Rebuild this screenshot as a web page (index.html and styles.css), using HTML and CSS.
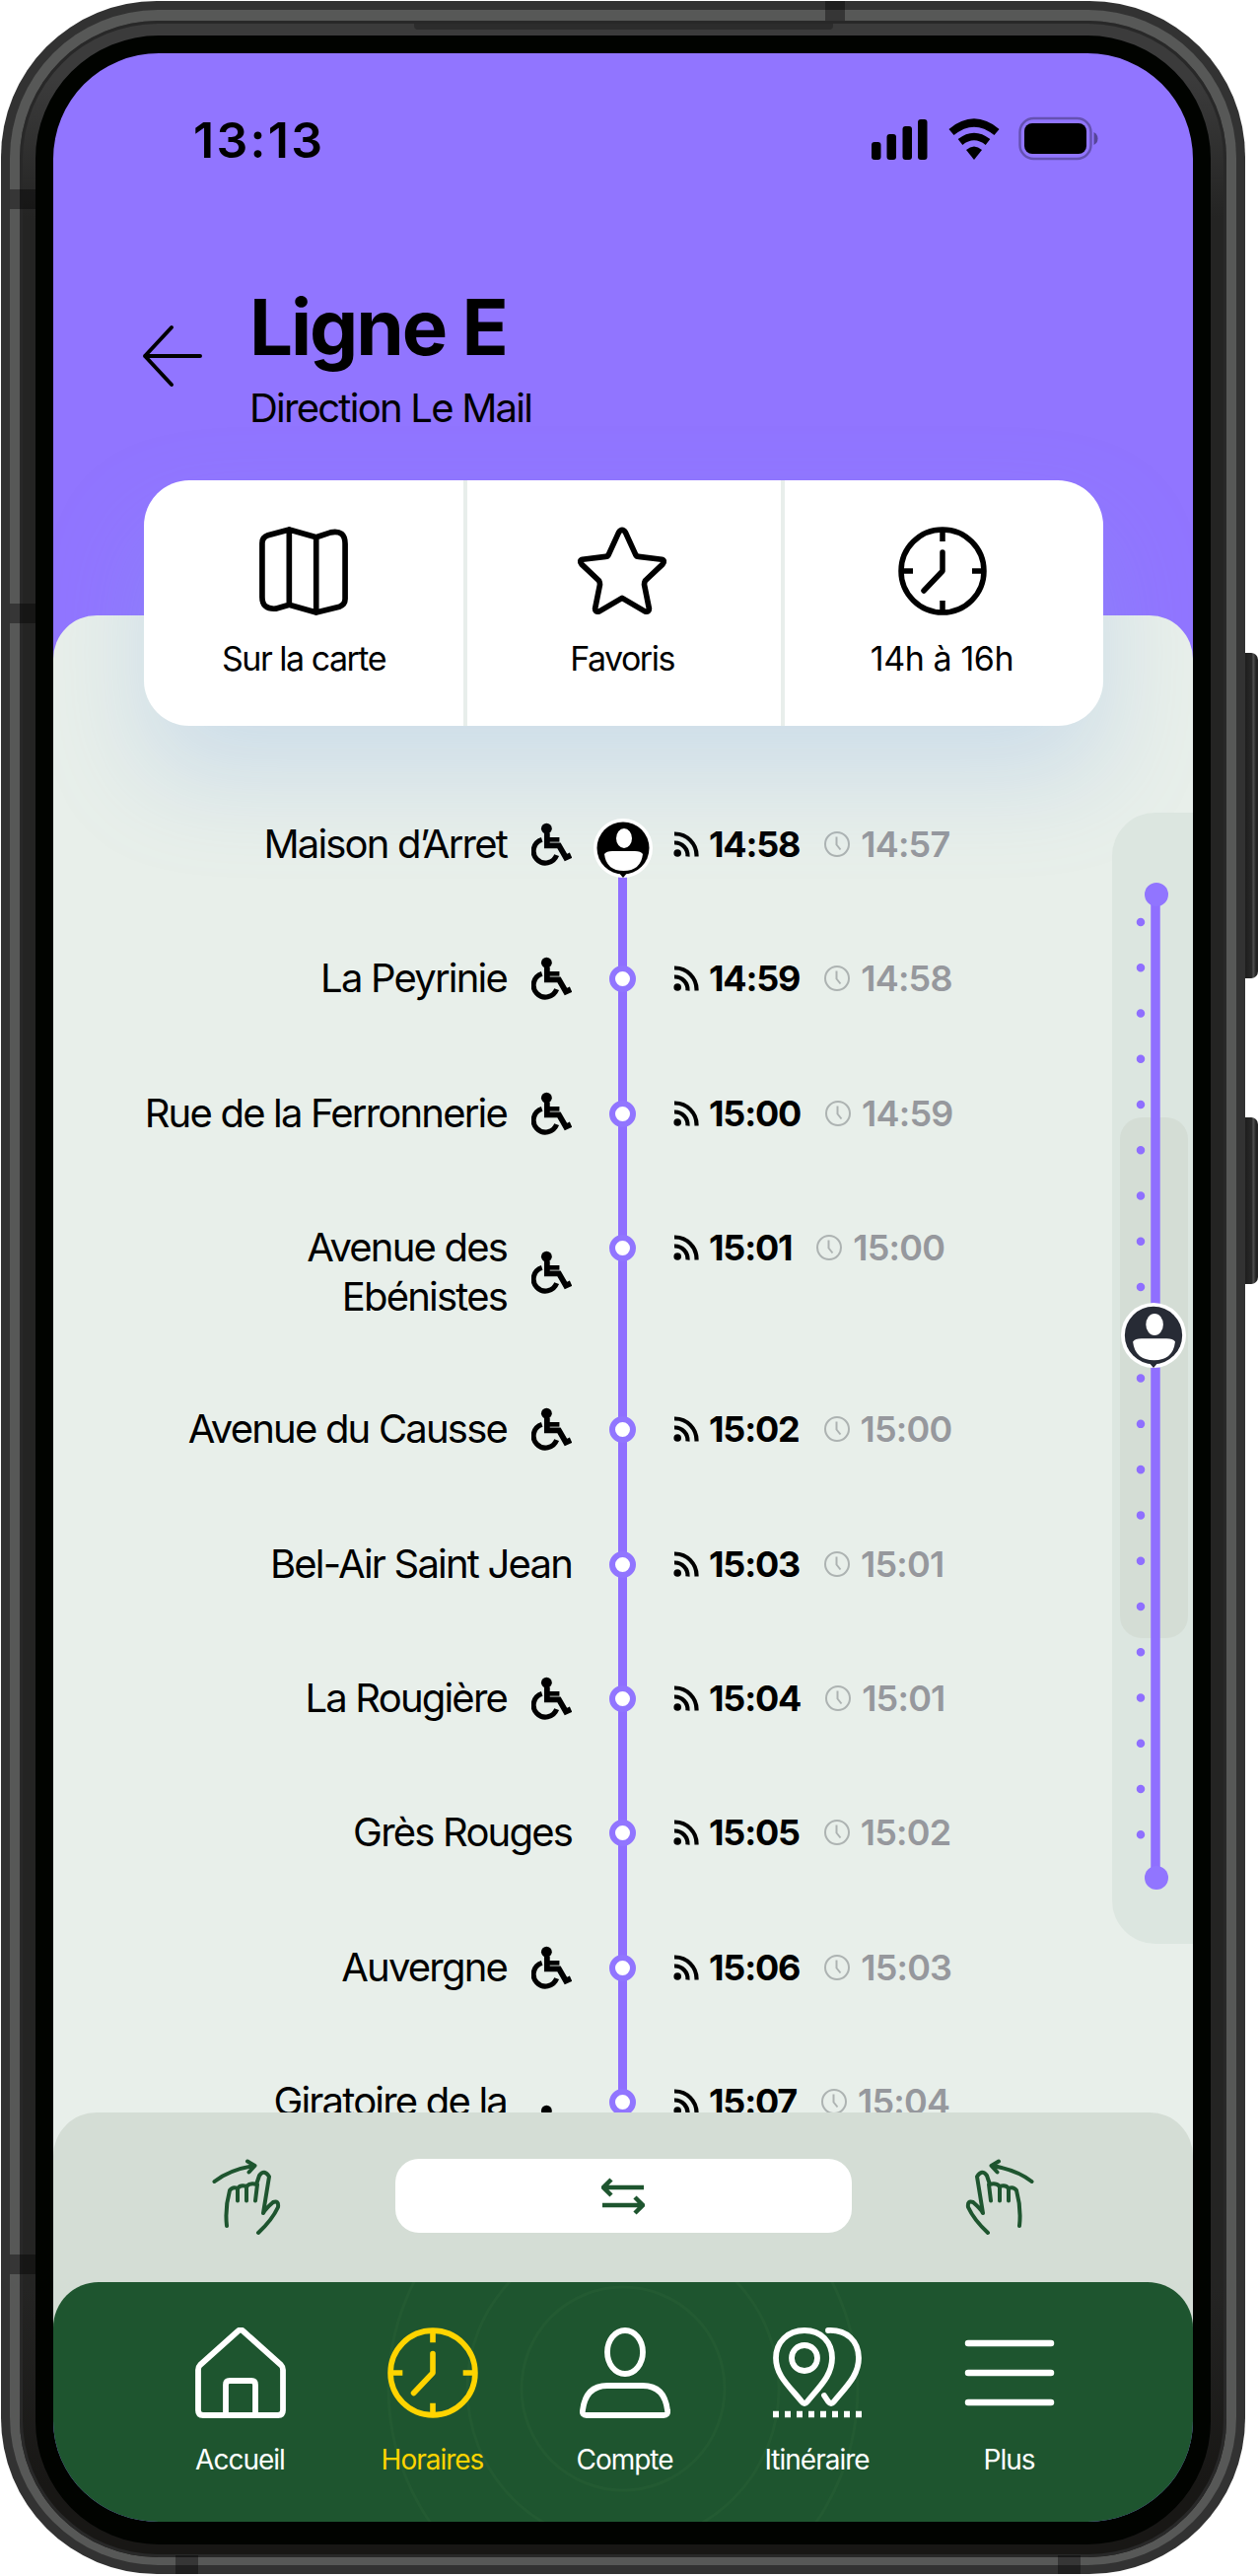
FILE: index.html
```html
<!DOCTYPE html>
<html lang="fr">
<head>
<meta charset="utf-8">
<title>Ligne E</title>
<link rel="stylesheet" href="styles.css">
</head>
<body>
<svg width="0" height="0" class="defs" aria-hidden="true">
  <symbol id="wheel" viewBox="0 0 44 46"><circle cx="16.500" cy="6" r="5.800"/><path d="M17 11v13.500h13l7.500 13 5.500-2.500" fill="none" stroke="currentColor" stroke-width="6.200"/><path d="M18 18h12.500" fill="none" stroke="currentColor" stroke-width="5"/><path d="M11.500 18a13 13 0 1 0 16 17" fill="none" stroke="currentColor" stroke-width="5.500"/></symbol>
  <symbol id="rss" viewBox="0 0 26 26"><circle cx="4.200" cy="22" r="3.800"/><g fill="none" stroke="currentColor" stroke-width="4.200"><path d="M1 11.500A13 13 0 0 1 14.500 25.500"/><path d="M1 2.500A22 22 0 0 1 23.500 25.500"/></g></symbol>
  <symbol id="tick" viewBox="0 0 26 26"><g fill="none" stroke="currentColor" stroke-width="2"><circle cx="13" cy="13" r="12"/><path d="M12.500 5.500v8l4 5"/></g></symbol>
  <symbol id="pin" viewBox="0 0 60 60"><circle cx="30" cy="30" r="30" fill="#fff"/><path d="M30 60l-5-6h10z"/><circle cx="30" cy="30" r="26.500"/><ellipse cx="31" cy="20" rx="8" ry="10" fill="#fff"/><path d="M11 36q2-3 8-3h23q6 0 8 3-2 17-19.500 17T11 36z" fill="#fff"/></symbol>
  <symbol id="clock" viewBox="0 0 90 90"><g fill="none" stroke="currentColor" stroke-width="5.500"><circle cx="45" cy="45" r="42"/><path d="M45 3v12M45 75v12M3 45h12M75 45h12"/><path d="M45 26v19L26 65" stroke-linecap="round" stroke-linejoin="round"/></g></symbol>
  <symbol id="hand" viewBox="0 0 70 78"><g fill="none" stroke="currentColor" stroke-width="4" stroke-linecap="round" stroke-linejoin="round"><path d="M2.500 23Q18 11 43 7M36 2.500l7.500 4.500-6 6.500"/><path d="M15 68q-2-18 3-36 3-4 8-2 3-4 9-2 4-4 10-2l3-9q5-7 10 1l-6 37q2-4 10-11 6-2 5 5-6 13-20 26M26 31v11.500M35 29v13.500M46 26l-2 16.500"/></g></symbol>
</svg>
<div class="phone">
  <i class="key key-a"></i><i class="key key-b"></i>
  <div class="rim"><div class="inner"><div class="bezel"><div class="screen">
    <header class="head">
      <div class="status">
        <span class="time">13:13</span>
        <svg class="sys" width="236" height="52" viewBox="0 0 236 52"><rect x="2" y="28" width="9.500" height="18" rx="3"/><rect x="17.500" y="20" width="9.500" height="26" rx="3"/><rect x="33.500" y="12" width="9.500" height="34" rx="3"/><rect x="49" y="5" width="9.500" height="41" rx="3"/><g fill="none" stroke="#000" stroke-width="8"><path d="M83 18Q106 -1 129 18"/><path d="M92 28Q106 17 120 28" stroke-width="7.500"/></g><path d="M98 36q8-7 16 0l-8 10z"/><rect x="152.500" y="4" width="72" height="41" rx="14" fill="none" stroke="#000" stroke-opacity=".3" stroke-width="2.500"/><rect x="157" y="9" width="63" height="31" rx="8"/><path d="M227.500 18v13q4-2 4-6.500t-4-6.500z" opacity=".4"/></svg>
      </div>
      <div class="title-row">
        <svg width="62" height="64" viewBox="0 0 62 64" class="back"><path d="M59 32H3M30 3L3 32l27 29"/></svg>
        <div><h1>Ligne E</h1><p>Direction Le Mail</p></div>
      </div>
    </header>
    <div class="panel">
      <nav class="card">
        <a><svg width="92" height="92" viewBox="0 0 92 92" class="ico"><path d="M3 17Q3 11 9 9l22-6 28 8 15-5q15-3 15 12v57q0 6-6 8l-24 6-28-8-14 4Q3 86 3 73zM31 3v78M59 11v78"/></svg>Sur la carte</a>
        <a><svg width="92" height="92" viewBox="0 0 92 92" class="ico"><path d="M42.500 6q3.500-5 7 0l10.500 23q1 2 3 2l24 3q4 1 1 5L70 56q-1 2-1 4l5 25q0 4-4 3L46 74 22 88q-4 1-4-3l5-25q0-2-1-4L4 39q-3-4 1-5l24-3q2 0 3-2z"/></svg>Favoris</a>
        <a class="hours"><svg width="90" height="90"><use href="#clock"/></svg>14h à 16h</a>
      </nav>
      <ol class="stops">
        <li class="first"><div class="name"><span>Maison d’Arret</span><svg><use href="#wheel"/></svg></div><div class="node"><svg class="pin"><use href="#pin"/></svg></div><div class="when"><svg><use href="#rss"/></svg><b>14:58</b><span><svg><use href="#tick"/></svg>14:57</span></div></li>
        <li><div class="name"><span>La Peyrinie</span><svg><use href="#wheel"/></svg></div><div class="node"><i></i></div><div class="when"><svg><use href="#rss"/></svg><b>14:59</b><span><svg><use href="#tick"/></svg>14:58</span></div></li>
        <li><div class="name"><span>Rue de la Ferronnerie</span><svg><use href="#wheel"/></svg></div><div class="node"><i></i></div><div class="when"><svg><use href="#rss"/></svg><b>15:00</b><span><svg><use href="#tick"/></svg>14:59</span></div></li>
        <li class="tall"><div class="name"><span>Avenue des<br>Ebénistes</span><svg><use href="#wheel"/></svg></div><div class="node"><i></i></div><div class="when"><svg><use href="#rss"/></svg><b>15:01</b><span><svg><use href="#tick"/></svg>15:00</span></div></li>
        <li><div class="name"><span>Avenue du Causse</span><svg><use href="#wheel"/></svg></div><div class="node"><i></i></div><div class="when"><svg><use href="#rss"/></svg><b>15:02</b><span><svg><use href="#tick"/></svg>15:00</span></div></li>
        <li><div class="name"><span>Bel-Air Saint Jean</span></div><div class="node"><i></i></div><div class="when"><svg><use href="#rss"/></svg><b>15:03</b><span><svg><use href="#tick"/></svg>15:01</span></div></li>
        <li><div class="name"><span>La Rougière</span><svg><use href="#wheel"/></svg></div><div class="node"><i></i></div><div class="when"><svg><use href="#rss"/></svg><b>15:04</b><span><svg><use href="#tick"/></svg>15:01</span></div></li>
        <li><div class="name"><span>Grès Rouges</span></div><div class="node"><i></i></div><div class="when"><svg><use href="#rss"/></svg><b>15:05</b><span><svg><use href="#tick"/></svg>15:02</span></div></li>
        <li><div class="name"><span>Auvergne</span><svg><use href="#wheel"/></svg></div><div class="node"><i></i></div><div class="when"><svg><use href="#rss"/></svg><b>15:06</b><span><svg><use href="#tick"/></svg>15:03</span></div></li>
        <li class="tall"><div class="name"><span>Giratoire de la<br>&nbsp;</span><svg><use href="#wheel"/></svg></div><div class="node"><i></i></div><div class="when"><svg><use href="#rss"/></svg><b>15:07</b><span><svg><use href="#tick"/></svg>15:04</span></div></li>
      </ol>
      <aside class="rail">
        <svg width="82" height="1147" viewBox="0 0 82 1147"><rect x="8" y="309" width="69" height="528" rx="22" fill="#d4ddd5"/><path d="M44 83v997" stroke="#8f6fff" stroke-width="9.500"/><g fill="#9175ff"><circle cx="45" cy="83" r="12"/><circle cx="45" cy="1080" r="12"/></g><path d="M29 111v926" stroke="#8f6fff" stroke-width="8.500" stroke-linecap="round" stroke-dasharray="0.01 46.250"/><use href="#pin" x="9" y="497" width="66" height="66" fill="#272b35"/></svg>
      </aside>
    </div>
    <div class="swap">
      <svg width="70" height="78"><use href="#hand"/></svg>
      <button><svg width="44" height="38" viewBox="0 0 44 38"><path d="M43 10H3M10 2L2 10l8 8M1 28h40M34 20l8 8-8 8" fill="none" stroke="#1e552f" stroke-width="4.500"/></svg></button>
      <svg width="70" height="78" class="flip"><use href="#hand"/></svg>
    </div>
    <footer class="tabs">
      <svg class="rings" width="1156" height="243" viewBox="0 0 1156 243"><g fill="none" stroke="#2b6138" stroke-opacity=".4" stroke-width="3"><circle cx="578" cy="108" r="103"/><circle cx="578" cy="108" r="158"/><circle cx="578" cy="108" r="238"/></g></svg>
      <a><svg width="92" height="92" viewBox="0 0 92 92" class="ico"><path d="M3 43q0-3 2-5L43 4q3-3 6 0l38 34q2 2 2 5v41q0 5-5 5H8q-5 0-5-5zM31 89V58q0-4 4-4h22q4 0 4 4v31"/></svg>Accueil</a>
      <a class="on"><svg width="92" height="92"><use href="#clock"/></svg>Horaires</a>
      <a><svg width="92" height="92" viewBox="0 0 92 92" class="ico"><ellipse cx="46" cy="25" rx="18" ry="22"/><path d="M7 89q-5 0-4-5 3-25 25-25h36q22 0 25 25 1 5-4 5z"/></svg>Compte</a>
      <a><svg width="92" height="92" viewBox="0 0 92 92" class="ico"><path d="M33 3c17 0 28 12 28 28 0 18-13 29-25 44q-3 4-6 0C18 60 4 49 4 31 4 15 16 3 33 3z"/><circle cx="33" cy="31" r="13"/><path d="M57 3c19-1 31 11 31 28 0 18-13 29-25 44q-3 4-6 0l-4-6"/><path d="M1 88h90" stroke-width="6.500" stroke-dasharray="6 6" stroke-linecap="butt"/></svg>Itinéraire</a>
      <a><svg width="92" height="92" viewBox="0 0 92 92" class="ico menu"><path d="M4 16h84M4 46h84M4 76h84"/></svg>Plus</a>
    </footer>
  </div></div></div></div>
  <i class="band l1"></i><i class="band l2"></i><i class="band l3"></i><i class="band t"></i><i class="band b1"></i><i class="band b2"></i><i class="speaker"></i>
</div>
</body>
</html>
```
FILE: styles.css
```css
* { box-sizing: border-box; }
body { margin: 0; background: #fff; font-family: Inter, "Liberation Sans", sans-serif; color: #000; }
svg { display: block; flex: none; fill: currentColor; }
.defs { position: absolute; }
.phone { position: relative; width: 1276px; height: 2612px; padding: 1px 13px 2px 1px; overflow: hidden; }
.rim { height: 2609px; padding: 9px; background: #323232; border-radius: 158px; position: relative; }
.inner { height: 2591px; padding: 11px 10px 8px; background: #575857; border-radius: 150px; }
.bezel { height: 2572px; padding: 15px 14px 15px 16px; background: linear-gradient(#3b3b3b 0, #3b3b3b 60px, #242423 200px, #242423 2300px, #181715 2500px); border-radius: 140px; box-shadow: inset 0 0 0 3px #282828; }
.screen { width: 1192px; height: 2544px; border: solid #010300; border-width: 18px 18px 23px; border-radius: 125px; background: #9175ff; overflow: hidden; display: flex; flex-direction: column; }
.key { position: absolute; left: 1261px; width: 15px; background: linear-gradient(90deg, #1b1b1a 0, #292929 9px, #515151 10px, #222 13px); border-radius: 0 7px 7px 0; }
.key-a { top: 662px; height: 330px; }
.key-b { top: 1133px; height: 169px; }
.band { position: absolute; background: rgba(0,0,0,.38); }
.l1, .l2, .l3 { left: 10px; width: 26px; height: 20px; }
.l1 { top: 192px; } .l2 { top: 612px; } .l3 { top: 2286px; }
.t { left: 837px; top: 1px; width: 20px; height: 20px; }
.b1, .b2 { top: 2591px; width: 23px; height: 19px; }
.b1 { left: 178px; } .b2 { left: 1073px; }
.speaker { position: absolute; left: 420px; top: 24px; width: 425px; height: 6px; background: #2c2c2c; border-radius: 0 0 4px 4px; }

.head { height: 570px; flex: none; padding: 62px 92px 0; }
.status { display: flex; justify-content: space-between; align-items: center; height: 52px; padding: 0 0 0 50px; }
.time { font-size: 50px; font-weight: 600; letter-spacing: 2.3px; }
.title-row { display: flex; gap: 46px; margin-top: 116px; }
.back { margin-top: 45px; margin-left: -2px; margin-right: 1px; fill: none; stroke: #000; stroke-width: 4; stroke-linecap: round; stroke-linejoin: round; }
h1 { margin: 0; font-size: 78px; line-height: 96px; font-weight: 700; letter-spacing: -2.1px; }
.title-row p { margin: 9px 0 0; font-size: 40px; line-height: 50px; letter-spacing: -1.75px; }
.panel { position: relative; flex: none; height: 1568px; margin-bottom: -50px; background: #e8efea; border-radius: 44px 44px 0 0; padding: 0 91px 0 92px; }
.card { position: relative; display: grid; grid-template-columns: 324px 322px 327px; height: 249px; margin-top: -137px; background: #fff; border-radius: 46px; box-shadow: 0 50px 100px rgba(128,170,230,.26); }
.card a { display: flex; flex-direction: column; align-items: center; gap: 22px; padding-top: 47px; font-size: 34px; line-height: 44px; letter-spacing: -1.5px; }
.card .hours { letter-spacing: -.4px; }
.card a + a { box-shadow: inset 4px 0 #e8eeeb; }
.card svg { height: 90px; }
.ico { fill: none; stroke: currentColor; stroke-width: 5.8; stroke-linecap: round; stroke-linejoin: round; }
.menu { stroke-width: 6.5; }
.stops { list-style: none; margin: 0 0 0 -30px; padding: 95px 0 0; height: 1406px; overflow: hidden; }
.stops li { display: grid; grid-template-columns: 464px 103px 1fr; height: 136.4px; }
.stops .tall { height: 184px; }
.name { display: flex; justify-content: flex-end; align-items: center; align-self: start; gap: 25px; font-size: 40px; line-height: 50px; letter-spacing: -1.8px; text-align: right; white-space: nowrap; }
.name svg { width: 41px; height: 44px; }
.node { position: relative; display: flex; justify-content: center; align-items: flex-start; padding-top: 12px; background: linear-gradient(#8f6fff, #8f6fff) center 25px / 9px 100% no-repeat; }
.node::after { content: ""; position: absolute; top: 100%; left: 47px; width: 9px; height: 25px; background: #8f6fff; }
.node i { position: relative; z-index: 1; width: 27px; height: 27px; border: 6px solid #9175ff; border-radius: 50%; background: #fff; }
.first .node { padding-top: 0; }
.pin { position: relative; width: 60px; height: 60px; margin-top: -1px; }
.when { display: flex; align-items: center; align-self: start; height: 50px; font-size: 36px; font-weight: 700; letter-spacing: -1.2px; }
.when svg { width: 26px; height: 26px; }
.when b { margin: 0 25px 0 10px; font-weight: 660; }
.when span { display: flex; align-items: center; gap: 11px; color: #96989d; font-weight: 600; letter-spacing: -.8px; }
.when span svg { color: #adb3b2; }
.rail { position: absolute; right: 0; top: 200px; width: 82px; height: 1147px; background: #dce6e0; border-radius: 44px 0 0 44px; }
.swap { position: relative; flex: none; height: 172px; background: #d4ddd5; border-radius: 44px 44px 0 0; box-shadow: 0 50px #d4ddd5; display: flex; justify-content: space-between; align-items: flex-start; padding: 47px 161px 0 161px; color: #1e552f; }
.swap button { width: 463px; height: 75px; border: 0; border-radius: 24px; background: #fff; padding: 0; display: grid; place-items: center; }
.flip { transform: scaleX(-1); }
.tabs { position: relative; flex: none; height: 243px; border-radius: 46px 46px 0 0; background: #1e552f; color: #fff; display: flex; justify-content: center; padding: 46px 0 0 3px; overflow: hidden; }
.tabs a { position: relative; width: 195px; display: flex; flex-direction: column; align-items: center; gap: 24px; font-size: 28px; line-height: 36px; letter-spacing: -1px; }
.tabs .on { color: #ffd400; }
.rings { position: absolute; left: 0; top: 0; }
```
